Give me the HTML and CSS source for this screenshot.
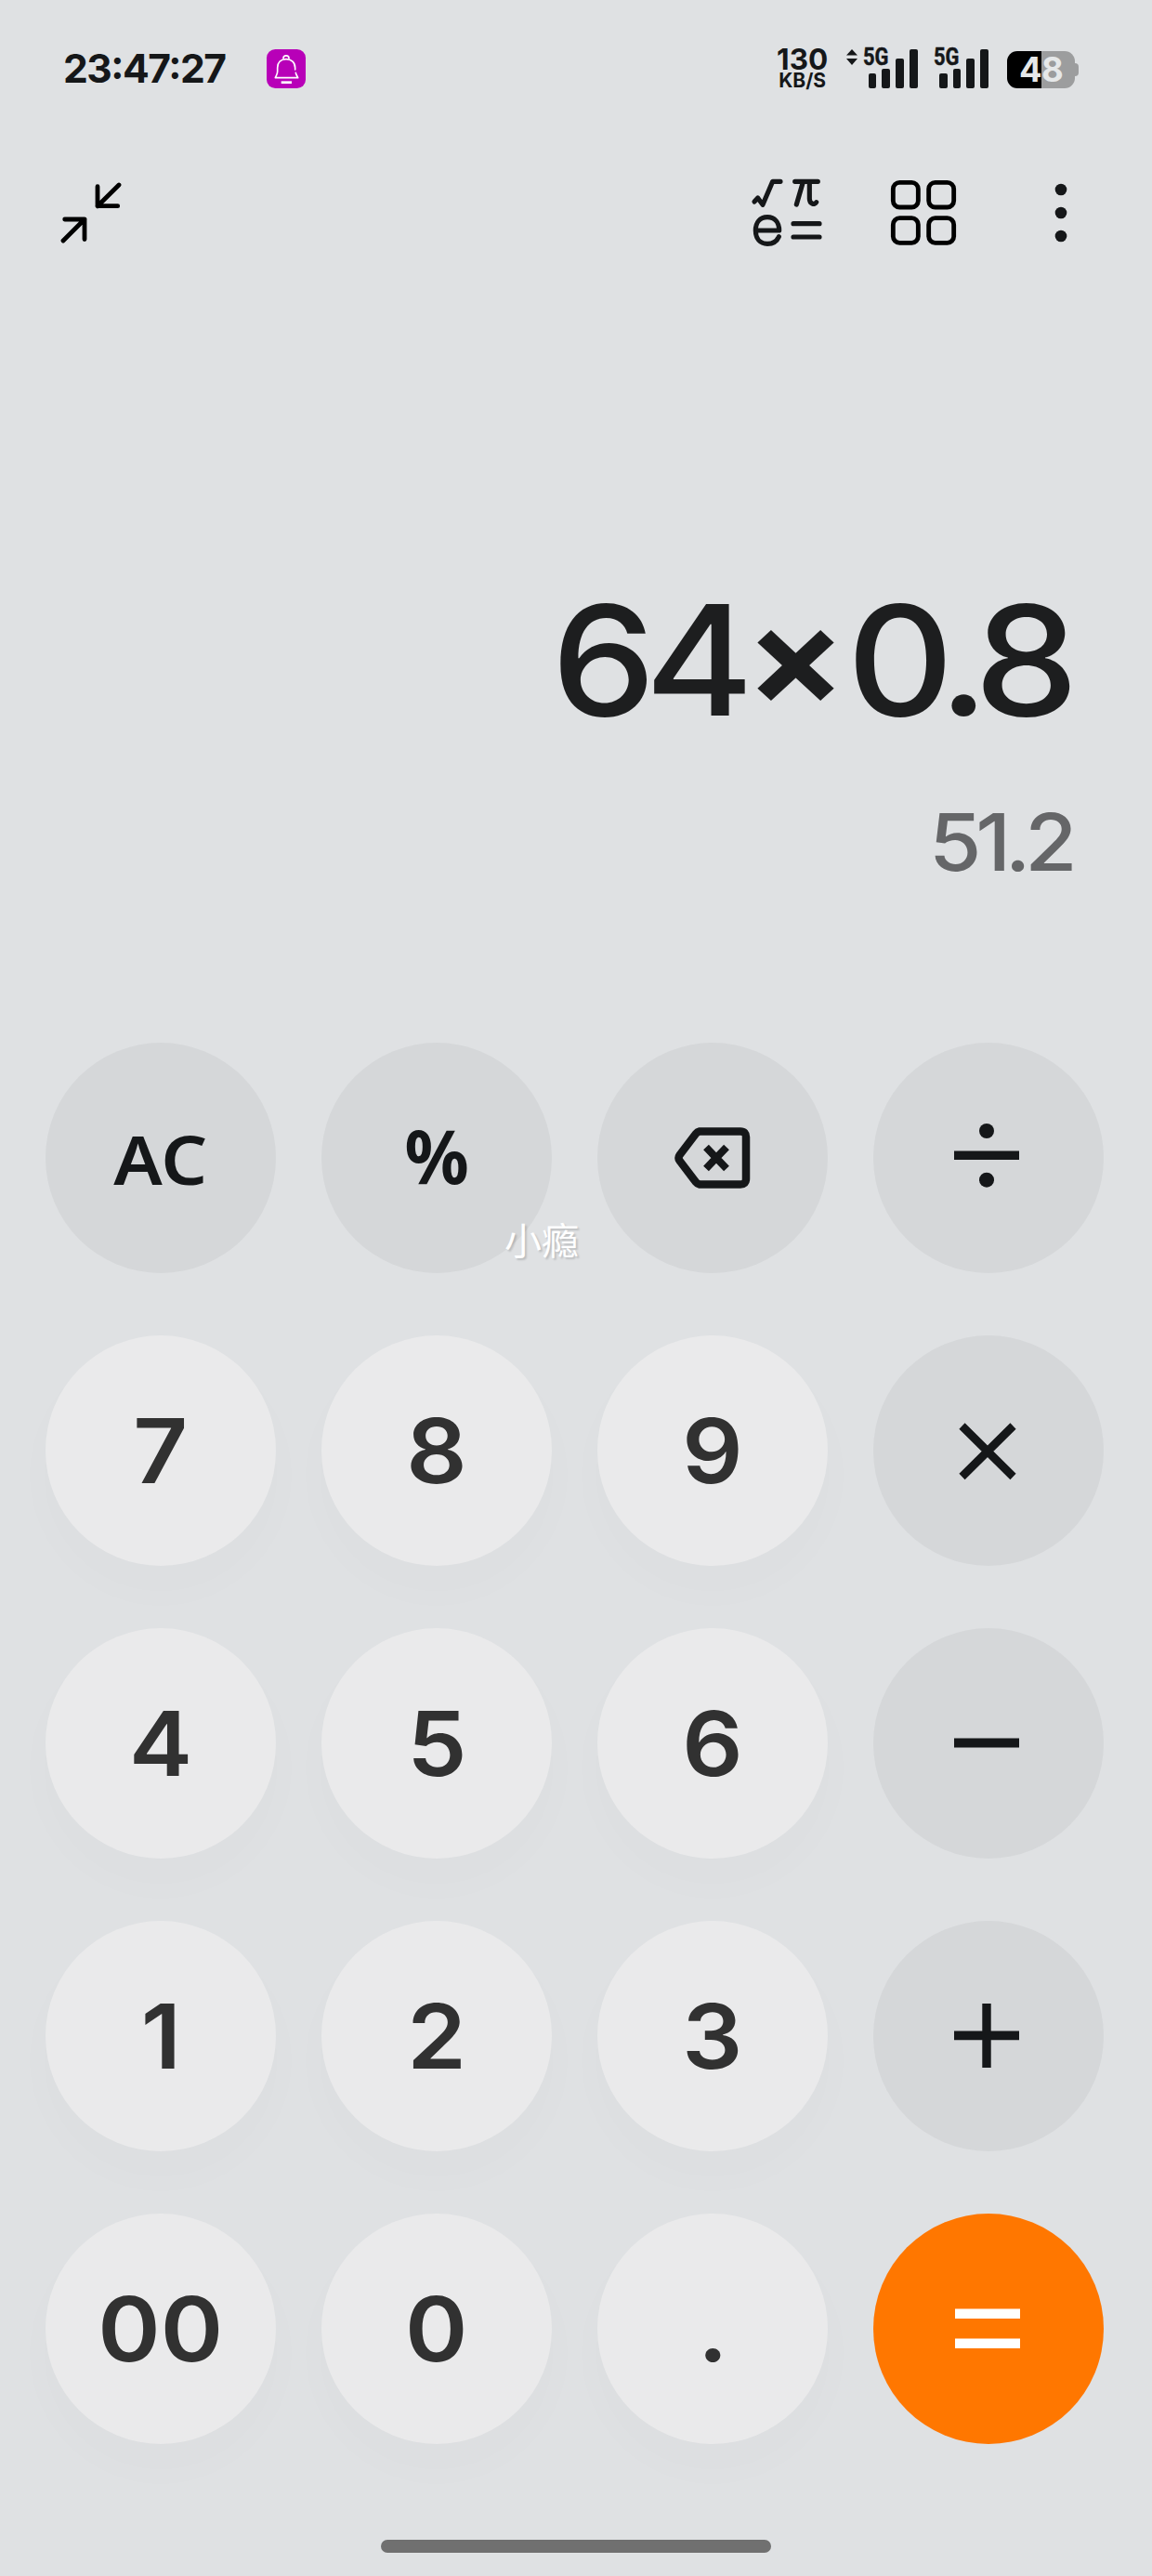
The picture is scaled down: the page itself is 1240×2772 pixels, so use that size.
FILE: index.html
```html
<!DOCTYPE html>
<html lang="zh-CN">
<head>
<meta charset="utf-8">
<title>Calculator</title>
<link rel="stylesheet" href="styles.css">
</head>
<body>
<main class="phone">
  <header class="status">
    <span class="clock">23<i>:</i>47<i>:</i>27</span>
    <svg class="bell" width="42" height="42" viewBox="0 0 126 126">
      <rect width="126" height="126" rx="28" fill="#b800b8"/>
      <g fill="none" stroke="#fff" stroke-width="5" stroke-linecap="round" stroke-linejoin="round">
        <path d="M92 66V60C92 43 80 32 63 32S35 43 35 60v12c0 8-4 13-7 20h73c-3-7-6-10-7-16"/>
        <path d="M54 29c0-11 18-11 18 0"/>
      </g>
      <path d="M47 107h34" stroke="#fff" stroke-width="8"/>
    </svg>
    <div class="speed"><b>130</b><small>KB/S</small></div>
    <div class="signal">
      <svg class="updown" width="12" height="17" viewBox="0 0 12 17"><path d="M6 0l6 6.400H0zM0 10h12l-6 7z"/></svg>
      <span class="net">5G</span>
      <div class="bars"><i class="b1"></i><i class="b2"></i><i class="b3"></i><i class="b4"></i></div>
    </div>
    <div class="signal">
      <span class="net">5G</span>
      <div class="bars"><i class="b1"></i><i class="b2"></i><i class="b3"></i><i class="b4"></i></div>
    </div>
    <div class="battery"><div class="cell">48</div><div class="nub"></div></div>
  </header>

  <nav class="toolbar">
    <svg class="collapse" width="68" height="68" viewBox="0 0 68 68" fill="none" stroke="#000" stroke-width="4.800" stroke-linecap="round" stroke-linejoin="round">
      <path d="M41 5.700v21h21.700M41 26.700L64 4M5.700 41H27v21.500M27 41L4 64"/>
    </svg>
    <svg class="science" width="78" height="76" viewBox="84 69 234 228" fill="none" stroke="#151719" stroke-width="15.500" stroke-linecap="round" stroke-linejoin="round">
      <path d="M96 147l11-12 16 22 32-75h25M227 82h74M253 84l-21 72M274 84v53c0 17 17 22 22 12"/>
      <path d="M102 240h74c0-26-14-43-38-43s-38 17-38 43 14 43 38 43c18 0 31-9 37-23M222 218h84M222 261h84"/>
    </svg>
    <svg class="tiles" width="70" height="70" viewBox="0 0 210 210" fill="none" stroke="#000" stroke-width="14.500">
      <rect x="7" y="7" width="81" height="80" rx="21"/><rect x="122" y="7" width="81" height="80" rx="21"/>
      <rect x="7" y="122" width="81" height="80" rx="21"/><rect x="122" y="122" width="81" height="80" rx="21"/>
    </svg>
    <svg class="more" width="14" height="64" viewBox="0 0 14 64" fill="#151719"><circle cx="7" cy="7" r="6.300"/><circle cx="7" cy="32" r="6.300"/><circle cx="7" cy="57" r="6.300"/></svg>
  </nav>

  <section class="display">
    <div class="expression">64<span class="times">×</span>0.8</div>
    <div class="result">51.2</div>
  </section>

  <section class="keys">
    <div class="key fn"><span class="ac">AC</span></div>
    <div class="key fn"><span class="pct">%</span></div>
    <div class="key fn"><svg width="82" height="66" viewBox="0 0 82 66" fill="none" stroke="#151719">
      <path stroke-width="8.500" stroke-linejoin="round" d="M27 4.500H71Q77 4.500 77 10.500V55.500Q77 61.500 71 61.500H27Q24.500 61 23 59L5.500 36Q3.500 33 5.500 30L23 7Q24.500 5 27 4.500z"/>
      <path stroke-width="8" d="M34 21.500L56 44.500M56 21.500L34 44.500"/></svg></div>
    <div class="key fn op"><svg width="70" height="70" viewBox="0 0 70 70" fill="#151719"><path d="M0 27.500h70v9.600H0z"/><circle cx="35" cy="6" r="8"/><circle cx="35" cy="58.700" r="8"/></svg></div>

    <div class="key"><span>7</span></div>
    <div class="key"><span>8</span></div>
    <div class="key"><span>9</span></div>
    <div class="key fn op"><svg width="70" height="70" viewBox="0 0 70 70" stroke="#151719" stroke-width="8.800"><path d="M8.500 8.500l55 54.500M63.500 8.500l-55 54.500"/></svg></div>

    <div class="key"><span>4</span></div>
    <div class="key"><span>5</span></div>
    <div class="key"><span>6</span></div>
    <div class="key fn op"><svg width="70" height="70" viewBox="0 0 70 70" fill="#151719"><path d="M0 29.500h70v10H0z"/></svg></div>

    <div class="key"><span>1</span></div>
    <div class="key"><span>2</span></div>
    <div class="key"><span>3</span></div>
    <div class="key fn op"><svg width="70" height="70" viewBox="0 0 70 70" fill="#151719"><path d="M0 29.500h70v9.800H0zM30.300 0h9.400v69h-9.400z"/></svg></div>

    <div class="key"><span>00</span></div>
    <div class="key"><span>0</span></div>
    <div class="key"><span>.</span></div>
    <div class="key equals op"><svg width="70" height="70" viewBox="0 0 70 70" fill="#fff"><path d="M1 13.500h70v10.500H1zM1 45.500h70v10.500H1z"/></svg></div>
  </section>

  <div class="home-bar"></div>
  <div class="floating-name">小瘾</div>
</main>
</body>
</html>
```
FILE: styles.css
```css
* { box-sizing: border-box; }
body { margin: 0; background: #dfe1e3; }
svg { display: block; flex: none; overflow: visible; }

.phone {
  position: relative;
  display: flex;
  flex-direction: column;
  width: 1240px;
  height: 2772px;
  overflow: hidden;
  color: #151719;
  background: #dfe1e3;
  font-family: Inter, "Liberation Sans", sans-serif;
}

/* status bar */
.status {
  display: flex;
  align-items: flex-start;
  height: 148px;
  padding: 52px 79px 0 68px;
}
.clock {
  width: 219px;
  font-size: 42.600px;
  line-height: 44px;
  font-weight: 650;
  letter-spacing: -1.500px;
  white-space: nowrap;
}
.clock i { font-style: normal; position: relative; top: -4px; }
.bell { margin-top: 1px; }
.speed {
  display: flex;
  flex-direction: column;
  align-items: center;
  width: 60px;
  margin-left: auto;
  line-height: 1;
}
.speed b { font-size: 31.500px; line-height: 24px; font-weight: 700; }
.speed small { font-size: 21px; line-height: 16px; margin-top: 3px; font-weight: 650; }
.signal {
  display: flex;
  align-items: flex-start;
  margin-left: 17px;
}
.updown { margin: 1px 6px 0 0; fill: #151719; }
.net {
  width: 6px;
  font: 700 26px/19px Roboto, sans-serif;
  -webkit-text-stroke: .5px #151719;
  transform: scaleX(.84);
  transform-origin: left;
}
.bars { display: flex; align-items: flex-end; gap: 6px; height: 43px; }
.bars i { width: 8.800px; border-radius: 2px; background: #151719; }
.bars .b1 { height: 16px; }
.bars .b2 { height: 21px; }
.bars .b3 { height: 32px; }
.bars .b4 { height: 42px; }
.battery { display: flex; align-items: center; margin: 3px 0 0 20px; }
.cell {
  width: 73px;
  height: 40px;
  border-radius: 11px;
  background: linear-gradient(90deg, #000 37px, #9c9d9e 37px);
  color: #e6e8e9;
  font-size: 36.500px;
  line-height: 41px;
  font-weight: 650;
  letter-spacing: -.8px;
  text-align: center;
}
.nub { width: 4px; height: 14px; border-radius: 0 5px 5px 0; background: #9c9d9e; }

/* toolbar */
.toolbar { display: flex; align-items: center; height: 162px; padding: 0 91px 0 64px; }
.science { margin-left: auto; }
.tiles { margin-left: 73px; }
.more { margin-left: 106px; }

/* display */
.display {
  display: flex;
  flex-direction: column;
  align-items: flex-end;
  height: 812px;
  padding: 300px 91px 0 0;
}
.expression {
  height: 202px;
  font-size: 164.600px;
  line-height: 202px;
  font-weight: 500;
  letter-spacing: -10.500px;
  color: #1d1e1f;
  transform: scaleX(1.083);
  transform-origin: right;
}
.times {
  display: inline-block;
  margin: 0 11px 0 2px;
  font-size: 148px;
  font-weight: 650;
  line-height: 1;
  transform: translateY(-11px);
}
.result {
  margin: 44px -4px 0 0;
  font-size: 85.300px;
  line-height: 100px;
  font-weight: 500;
  letter-spacing: -5.800px;
  color: #656668;
  transform: scaleX(1.07);
  transform-origin: right;
}

/* keypad */
.keys {
  display: grid;
  grid-template-columns: repeat(4, 248px);
  grid-auto-rows: 248px;
  gap: 67px 49px;
  padding-left: 49px;
}
.key {
  display: flex;
  align-items: center;
  justify-content: center;
  border-radius: 50%;
  background: #eaeaeb;
  color: #313131;
  font-size: 96.500px;
  font-weight: 600;
  box-shadow: 0 26px 36px 10px rgba(90, 110, 110, .01);
}
.key span { transform: scaleX(1.06); }
.key.fn { background: #d5d7d9; color: #151719; box-shadow: none; }
.key.equals { background: #ff7700; box-shadow: none; }
.op svg { margin-right: 4px; }
.key .ac, .key .pct { font-family: "Noto Sans", sans-serif; font-weight: 650; }
.key .ac { font-size: 72.500px; transform: scaleX(1.08); }
.key .pct { font-size: 80px; font-weight: 700; margin-top: -8px; transform: scaleX(.96); }

.home-bar {
  width: 420px;
  height: 14px;
  margin: 103px auto 0;
  border-radius: 7px;
  background: #707070;
}
.floating-name {
  position: absolute;
  left: 543px;
  top: 1304px;
  font: 400 40px/58px "Noto Sans CJK SC", sans-serif;
  color: #fff;
  text-shadow: 2px 2px 2px rgba(0, 0, 0, .16);
}
```
